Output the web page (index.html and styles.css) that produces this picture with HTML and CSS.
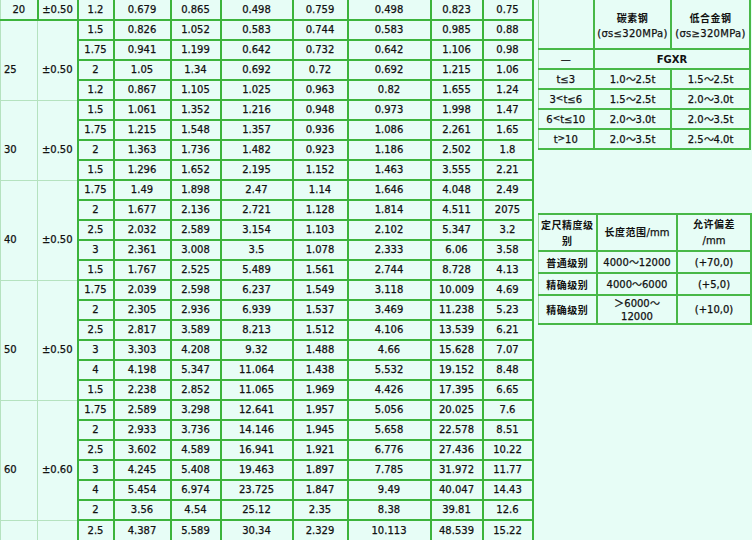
FILE: index.html
```html
<!DOCTYPE html>
<html lang="zh-CN">
<head>
<meta charset="utf-8">
<title>钢管规格表</title>
<link rel="stylesheet" href="styles.css">
</head>
<body>
<div class="page">
  <table class="main">
    <colgroup>
      <col class="c1"><col class="c2"><col class="c3"><col class="c4"><col class="c5">
      <col class="c6"><col class="c7"><col class="c8"><col class="c9"><col class="c10">
    </colgroup>
    <tbody>
      <tr><td class="first">20</td><td>±0.50</td><td>1.2</td><td>0.679</td><td>0.865</td><td>0.498</td><td>0.759</td><td>0.498</td><td>0.823</td><td>0.75</td></tr>

      <tr><td class="g lab" rowspan="4">25</td><td class="g" rowspan="4">±0.50</td><td>1.5</td><td>0.826</td><td>1.052</td><td>0.583</td><td>0.744</td><td>0.583</td><td>0.985</td><td>0.88</td></tr>
      <tr><td>1.75</td><td>0.941</td><td>1.199</td><td>0.642</td><td>0.732</td><td>0.642</td><td>1.106</td><td>0.98</td></tr>
      <tr><td>2</td><td>1.05</td><td>1.34</td><td>0.692</td><td>0.72</td><td>0.692</td><td>1.215</td><td>1.06</td></tr>
      <tr><td>1.2</td><td>0.867</td><td>1.105</td><td>1.025</td><td>0.963</td><td>0.82</td><td>1.655</td><td>1.24</td></tr>

      <tr><td class="g lab" rowspan="4">30</td><td class="g" rowspan="4">±0.50</td><td>1.5</td><td>1.061</td><td>1.352</td><td>1.216</td><td>0.948</td><td>0.973</td><td>1.998</td><td>1.47</td></tr>
      <tr><td>1.75</td><td>1.215</td><td>1.548</td><td>1.357</td><td>0.936</td><td>1.086</td><td>2.261</td><td>1.65</td></tr>
      <tr><td>2</td><td>1.363</td><td>1.736</td><td>1.482</td><td>0.923</td><td>1.186</td><td>2.502</td><td>1.8</td></tr>
      <tr><td>1.5</td><td>1.296</td><td>1.652</td><td>2.195</td><td>1.152</td><td>1.463</td><td>3.555</td><td>2.21</td></tr>

      <tr><td class="g lab" rowspan="5">40</td><td class="g" rowspan="5">±0.50</td><td>1.75</td><td>1.49</td><td>1.898</td><td>2.47</td><td>1.14</td><td>1.646</td><td>4.048</td><td>2.49</td></tr>
      <tr><td>2</td><td>1.677</td><td>2.136</td><td>2.721</td><td>1.128</td><td>1.814</td><td>4.511</td><td>2075</td></tr>
      <tr><td>2.5</td><td>2.032</td><td>2.589</td><td>3.154</td><td>1.103</td><td>2.102</td><td>5.347</td><td>3.2</td></tr>
      <tr><td>3</td><td>2.361</td><td>3.008</td><td>3.5</td><td>1.078</td><td>2.333</td><td>6.06</td><td>3.58</td></tr>
      <tr><td>1.5</td><td>1.767</td><td>2.525</td><td>5.489</td><td>1.561</td><td>2.744</td><td>8.728</td><td>4.13</td></tr>

      <tr><td class="g lab" rowspan="6">50</td><td class="g" rowspan="6">±0.50</td><td>1.75</td><td>2.039</td><td>2.598</td><td>6.237</td><td>1.549</td><td>3.118</td><td>10.009</td><td>4.69</td></tr>
      <tr><td>2</td><td>2.305</td><td>2.936</td><td>6.939</td><td>1.537</td><td>3.469</td><td>11.238</td><td>5.23</td></tr>
      <tr><td>2.5</td><td>2.817</td><td>3.589</td><td>8.213</td><td>1.512</td><td>4.106</td><td>13.539</td><td>6.21</td></tr>
      <tr><td>3</td><td>3.303</td><td>4.208</td><td>9.32</td><td>1.488</td><td>4.66</td><td>15.628</td><td>7.07</td></tr>
      <tr><td>4</td><td>4.198</td><td>5.347</td><td>11.064</td><td>1.438</td><td>5.532</td><td>19.152</td><td>8.48</td></tr>
      <tr><td>1.5</td><td>2.238</td><td>2.852</td><td>11.065</td><td>1.969</td><td>4.426</td><td>17.395</td><td>6.65</td></tr>

      <tr><td class="g lab" rowspan="6">60</td><td class="g" rowspan="6">±0.60</td><td>1.75</td><td>2.589</td><td>3.298</td><td>12.641</td><td>1.957</td><td>5.056</td><td>20.025</td><td>7.6</td></tr>
      <tr><td>2</td><td>2.933</td><td>3.736</td><td>14.146</td><td>1.945</td><td>5.658</td><td>22.578</td><td>8.51</td></tr>
      <tr><td>2.5</td><td>3.602</td><td>4.589</td><td>16.941</td><td>1.921</td><td>6.776</td><td>27.436</td><td>10.22</td></tr>
      <tr><td>3</td><td>4.245</td><td>5.408</td><td>19.463</td><td>1.897</td><td>7.785</td><td>31.972</td><td>11.77</td></tr>
      <tr><td>4</td><td>5.454</td><td>6.974</td><td>23.725</td><td>1.847</td><td>9.49</td><td>40.047</td><td>14.43</td></tr>
      <tr><td>2</td><td>3.56</td><td>4.54</td><td>25.12</td><td>2.35</td><td>8.38</td><td>39.81</td><td>12.6</td></tr>

      <tr><td class="g lab"></td><td class="g"></td><td>2.5</td><td>4.387</td><td>5.589</td><td>30.34</td><td>2.329</td><td>10.113</td><td>48.539</td><td>15.22</td></tr>
    </tbody>
  </table>

  <div class="side">
    <table class="bend">
      <colgroup><col class="b1"><col class="b2"><col class="b3"></colgroup>
      <tbody>
        <tr class="bhead"><td></td><td><span class="cjk">碳素钢</span><br>(σs≤320MPa)</td><td><span class="cjk">低合金钢</span><br>(σs≥320MPa)</td></tr>
        <tr><td>—</td><td colspan="2" class="strong">FGXR</td></tr>
        <tr><td>t≤3</td><td>1.0～2.5t</td><td>1.5～2.5t</td></tr>
        <tr><td>3<sup>&lt;</sup>t≤6</td><td>1.5～2.5t</td><td>2.0～3.0t</td></tr>
        <tr><td>6<sup>&lt;</sup>t≤10</td><td>2.0～3.0t</td><td>2.0～3.5t</td></tr>
        <tr><td>t<sup>&gt;</sup>10</td><td>2.0～3.5t</td><td>2.5～4.0t</td></tr>
      </tbody>
    </table>

    <table class="len">
      <colgroup><col class="l1"><col class="l2"><col class="l3"></colgroup>
      <tbody>
        <tr class="lhead"><td class="cjk">定尺精度级<br>别</td><td><span class="cjk">长度范围</span>/mm</td><td><span class="cjk">允许偏差</span><br>/mm</td></tr>
        <tr class="lrow"><td class="cjk">普通级别</td><td>4000～12000</td><td>(+70,0)</td></tr>
        <tr class="lrow"><td class="cjk">精确级别</td><td>4000～6000</td><td>(+5,0)</td></tr>
        <tr class="ltall"><td class="cjk">精确级别</td><td>＞6000～<br>12000</td><td>(+10,0)</td></tr>
      </tbody>
    </table>
  </div>
</div>
</body>
</html>
```

FILE: styles.css
```css
html, body {
  margin: 0;
  padding: 0;
  background: #e7fdf6;
}

body {
  font-family: "DejaVu Sans", Verdana, sans-serif;
  font-size: 10px;
  color: #111;
  -webkit-text-stroke: 0.25px #111;
}

.page {
  display: flex;
  align-items: flex-start;
  gap: 4px;
  width: 752px;
  height: 540px;
  overflow: hidden;
}

/* ---------- main table ---------- */
.main {
  border-collapse: collapse;
  table-layout: fixed;
  width: 533px;
}

.c1 { width: 37px; }
.c2 { width: 40px; }
.c3 { width: 36px; }
.c4 { width: 57px; }
.c5 { width: 50px; }
.c6 { width: 72px; }
.c7 { width: 55px; }
.c8 { width: 83px; }
.c9 { width: 52px; }
.c10 { width: 50px; }

.main tr {
  height: 20px;
}

.main td {
  border: 2px solid #3cb43c;
  padding: 0;
  text-align: center;
  vertical-align: middle;
  line-height: 14px;
  white-space: nowrap;
}

.main tr:first-child td {
  border-top: none;
}

.main td.first {
  border-left: 1px solid #b5e2bf;
}

.main td.g {
  border: 1px solid #b5e2bf;
  padding-top: 20px;
}

.main td.lab {
  text-align: left;
  padding-left: 3px;
}

/* ---------- side tables ---------- */
.side {
  display: flex;
  flex-direction: column;
  gap: 63px;
  width: 213px;
}

.bend, .len {
  border-collapse: collapse;
  table-layout: fixed;
  width: 212px;
}

.bend td, .len td {
  border: 2px solid #48b848;
  padding: 0;
  text-align: center;
  vertical-align: middle;
  line-height: 15px;
  white-space: nowrap;
}

.bend tr:first-child td {
  border-top: none;
}

.bend td:first-child, .len td:first-child {
  border-left: 1px solid #9ad49f;
}

.b1 { width: 56px; }
.b2 { width: 77px; }
.b3 { width: 79px; }

.bend tr { height: 20px; }
.bend tr.bhead { height: 49px; }

.bhead td {
  letter-spacing: 0.3px;
  padding-top: 3px;
}

.strong {
  font-weight: bold;
  -webkit-text-stroke: 0;
}

.cjk {
  font-family: "Noto Sans CJK SC", "DejaVu Sans", sans-serif;
  font-size: 10px;
  font-weight: bold;
  letter-spacing: 0.5px;
  -webkit-text-stroke: 0;
}

sup {
  font-size: 9px;
  vertical-align: 2px;
  line-height: 0;
}

.l1 { width: 59px; }
.l2 { width: 80px; }
.l3 { width: 74px; }

.len tr.lhead { height: 37px; }
.len tr.lrow { height: 22px; }
.len tr.ltall { height: 29px; }

.lhead td {
  line-height: 16px;
}

.ltall td {
  line-height: 13px;
}
```
